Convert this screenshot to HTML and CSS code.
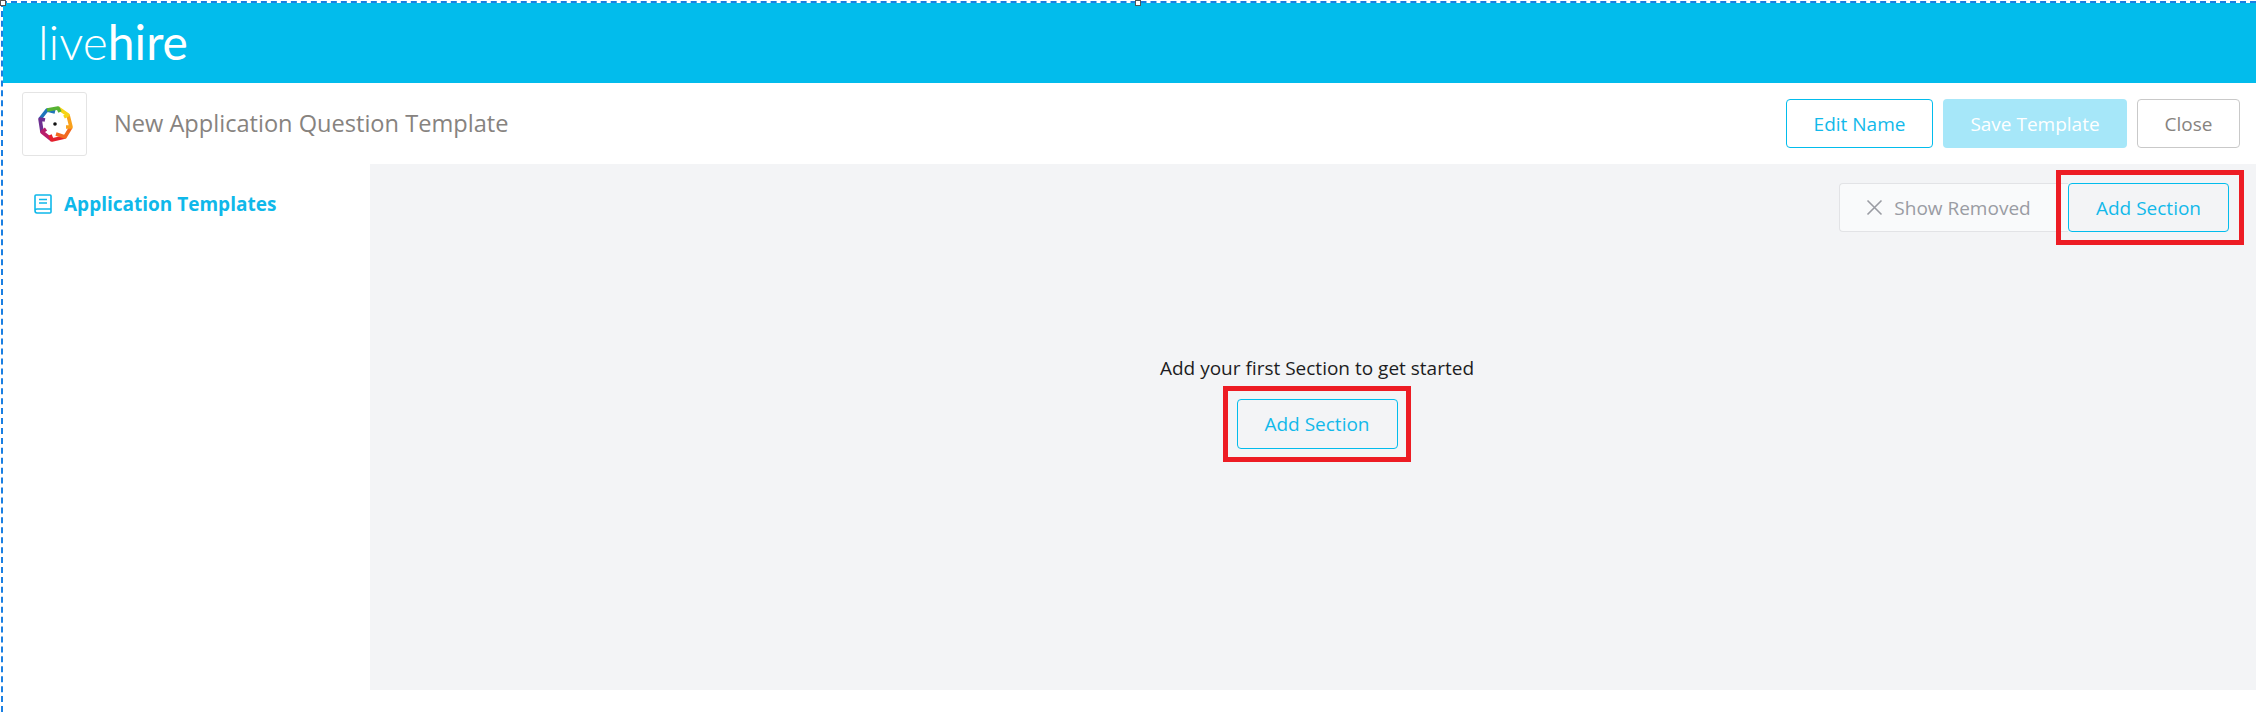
FILE: index.html
```html
<!DOCTYPE html>
<html lang="en">
<head>
  <meta charset="UTF-8">
  <meta name="viewport" content="width=device-width, initial-scale=1.0">
  <title>New Application Question Template</title>
  <link rel="stylesheet" href="styles.css">
</head>
<body>
  <!-- Selection frame left by the screenshot editor -->
  <div class="frame">
    <span class="handle handle-left"></span>
    <span class="handle handle-mid"></span>
  </div>

  <div class="page">
    <header class="topbar">
      <div class="brand"><span class="brand-thin">live</span><span class="brand-bold">hire</span></div>
    </header>

    <div class="titlebar">
      <div class="logo-box">
        <svg class="logo-ring" width="40" height="40" viewBox="0 0 40 40" fill="none" stroke-width="3.600" stroke-linejoin="round">
          <path d="M5 15 L12 6 L20 8" stroke="#1f74bb"/>
          <path d="M7 28 L5 15 L10 16" stroke="#6d2f91"/>
          <path d="M17 36 L7 28 L11 25" stroke="#b81d6c"/>
          <path d="M30 33 L17 36 L15 31" stroke="#e3202c"/>
          <path d="M36 23 L30 33 L21 30" stroke="#f2691f"/>
          <path d="M33 11 L36 23 L31 23" stroke="#f9a11b"/>
          <path d="M23 4 L33 11 L29 13" stroke="#f7d417"/>
          <path d="M12 6 L23 4 L25 8" stroke="#57b233"/>
          <circle cx="20" cy="20" r="1.800" fill="#111" stroke="none"/>
        </svg>
      </div>
      <h1 class="page-title">New Application Question Template</h1>
      <div class="title-actions">
        <button class="btn btn-outline btn-edit">Edit Name</button>
        <button class="btn btn-save">Save Template</button>
        <button class="btn btn-close">Close</button>
      </div>
    </div>

    <div class="content">
      <aside class="sidebar">
        <a class="side-link">
          <svg width="18" height="20" viewBox="0 0 18 20" fill="none" stroke="currentColor" stroke-width="1.6">
            <path d="M1 16 V2 Q1 1 2 1 H16 a1 1 0 0 1 1 1 V18 a1 1 0 0 1 -1 1 H3 Q1 19 1 16.500 Q1 15 3 15 H17"/>
            <path d="M5 5.500 H13 M5 9 H13"/>
          </svg>
          Application Templates
        </a>
      </aside>

      <main class="main">
        <div class="main-actions">
          <button class="btn btn-removed">
            <svg width="17" height="17" viewBox="0 0 17 17" fill="none" stroke="currentColor" stroke-width="1.6">
              <path d="M1.500 1.500 L15.500 15.500 M15.500 1.500 L1.500 15.500"/>
            </svg>
            Show Removed
          </button>
          <button class="btn btn-outline btn-add marked marked-top">Add Section</button>
        </div>
        <div class="empty">
          <p class="empty-text">Add your first Section to get started</p>
          <button class="btn btn-outline btn-add btn-first marked">Add Section</button>
        </div>
      </main>
    </div>
  </div>
</body>
</html>
```

FILE: styles.css
```css
* {
  box-sizing: border-box;
}
html, body {
  margin: 0;
  height: 712px;
  overflow: hidden;
  background: #fff;
}
body {
  position: relative;
  font-family: "Open Sans", Arial, sans-serif;
}
.frame {
  position: absolute;
  top: 1px;
  left: 1px;
  right: 0;
  bottom: 0;
  border-top: 2px dashed #1a7fe2;
  border-left: 2px dashed #1a7fe2;
  z-index: 2;
}
.handle {
  position: absolute;
  top: -3px;
  width: 6px;
  height: 6px;
  background: #fff;
  border: 1px solid #555;
}
.handle-left {
  left: -3px;
}
.handle-mid {
  left: 1132px;
}
.page {
  padding: 3px 0 0 3px;
}
.topbar {
  height: 80px;
  background: #02bcec;
  padding-left: 35px;
  display: flex;
  align-items: center;
}
.brand {
  font-family: Lato, "Open Sans", sans-serif;
  font-size: 48px;
  line-height: 1;
  color: #fff;
  margin-top: -3px;
}
.brand-thin {
  font-weight: 300;
}
.brand-bold {
  font-weight: 400;
}
.titlebar {
  height: 81px;
  display: flex;
  align-items: center;
  padding: 0 16px 0 19px;
}
.logo-box {
  width: 65px;
  height: 64px;
  border: 1px solid #e4e4e4;
  border-radius: 3px;
  display: flex;
  align-items: center;
  justify-content: center;
}
.page-title {
  margin: -2px 0 0 27px;
  font-size: 23.600px;
  font-weight: 400;
  color: #87837f;
}
.title-actions {
  margin-left: auto;
  display: flex;
  gap: 10px;
}
.btn {
  height: 49px;
  font-family: inherit;
  font-size: 19px;
  border-radius: 4px;
  background: transparent;
  padding: 0;
}
.btn-outline {
  border: 1px solid #02bcec;
  color: #12b9ea;
}
.btn-edit {
  width: 147px;
}
.btn-save {
  width: 184px;
  border: none;
  background: #a6e7f9;
  color: #fff;
}
.btn-close {
  width: 103px;
  border: 1px solid #c9c9c9;
  color: #87837f;
}
.content {
  display: flex;
  height: 526px;
}
.sidebar {
  width: 367px;
  padding: 27px 0 0 31px;
}
.side-link {
  display: flex;
  align-items: center;
  gap: 12px;
  font-size: 19px;
  font-weight: 700;
  color: #0fb8ea;
}
.main {
  flex: 1;
  background: #f3f4f6;
}
.main-actions {
  display: flex;
  justify-content: flex-end;
  padding: 19px 27px 0 0;
}
.btn-removed {
  width: 229px;
  display: flex;
  align-items: center;
  justify-content: center;
  gap: 11px;
  padding-right: 11px;
  background: #f9fafb;
  border: 1px solid #e2e3e6;
  border-right: none;
  border-radius: 4px 0 0 4px;
  color: #9a9ca3;
}
.btn-add {
  width: 161px;
}
.btn-first {
  height: 50px;
}
.marked {
  position: relative;
}
.marked::after {
  content: "";
  position: absolute;
  top: -14px;
  bottom: -14px;
  left: -15px;
  right: -14px;
  border: 5px solid #ed1c24;
}
.marked-top::after {
  left: -13px;
  right: -16px;
}
.empty {
  display: flex;
  flex-direction: column;
  align-items: center;
  padding: 124px 0 0 8px;
}
.empty-text {
  margin: 0 0 18px;
  font-size: 19px;
  line-height: 25px;
  color: #1d1d22;
}
```
